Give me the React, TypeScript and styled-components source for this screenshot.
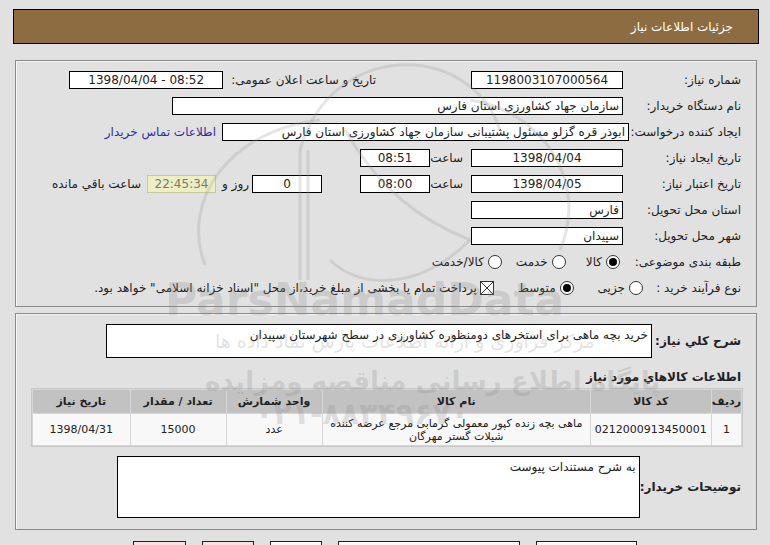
import styled, { createGlobalStyle } from "styled-components";

const GlobalStyle = createGlobalStyle`
  html, body {
    margin: 0;
    padding: 0;
    background: #e1e1e1;
    overflow: hidden;
  }
  body {
    font-family: Tahoma, "DejaVu Sans", sans-serif;
    font-size: 12px;
    color: #222;
  }
`;

const Page = styled.div`
  position: relative;
  direction: rtl;
  padding: 9px 11px 0 13px;
  width: 746px;
`;

const TitleBar = styled.div`
  height: 33px;
  background: #8c6c40;
  border: 1px solid #000;
  color: #fff;
  display: flex;
  align-items: center;
  padding-right: 25px;
  font-size: 12px;
`;

const Panel = styled.div<{ $top: number; $pad: string }>`
  margin: ${(p) => p.$top}px 2px 0 2px;
  border: 1px solid #8a8a8a;
  box-shadow: inset 1px 1px 0 #f4f4f4;
  padding: ${(p) => p.$pad};
`;

const Row = styled.div<{ $h?: number }>`
  display: flex;
  align-items: center;
  height: ${(p) => p.$h ?? 26}px;
  white-space: nowrap;
`;

const Label = styled.div<{ $w?: number; $bold?: boolean }>`
  width: ${(p) => (p.$w ? `${p.$w}px` : "auto")};
  flex-shrink: 0;
  font-weight: ${(p) => (p.$bold ? "bold" : "normal")};
  color: #222;
`;

const Field = styled.div<{ $w: number; $align?: string; $mr?: number; $ltr?: boolean }>`
  width: ${(p) => p.$w}px;
  height: 16px;
  margin-right: ${(p) => p.$mr ?? 0}px;
  background: #fff;
  border: 1px solid #000;
  text-align: ${(p) => p.$align ?? "center"};
  padding: 0 3px;
  box-sizing: content-box;
  line-height: 16px;
  overflow: hidden;
  flex-shrink: 0;
  direction: ${(p) => (p.$ltr ? "ltr" : "rtl")};
`;

const Remaining = styled(Field)`
  background: #eeeec4;
  border-color: #c8c8a0;
  color: #7a7a6a;
`;

const Text = styled.span<{ $mr?: number; $w?: number }>`
  display: inline-block;
  width: ${(p) => (p.$w ? `${p.$w}px` : "auto")};
  margin-right: ${(p) => p.$mr ?? 0}px;
  flex-shrink: 0;
`;

const Link = styled.a`
  margin-right: 6px;
  color: #2e2e9a;
  text-decoration: none;
`;

const Radio = styled.span<{ $on?: boolean; $mr?: number }>`
  width: 12px;
  height: 12px;
  border-radius: 50%;
  border: 1px solid #333;
  background: #fff;
  display: inline-flex;
  align-items: center;
  justify-content: center;
  margin-right: ${(p) => p.$mr ?? 0}px;
  margin-left: 4px;
  flex-shrink: 0;
  &::after {
    content: "";
    width: 8px;
    height: 8px;
    border-radius: 50%;
    background: ${(p) => (p.$on ? "#000" : "transparent")};
  }
`;

const Check = styled.svg`
  width: 14px;
  height: 14px;
  margin-right: 24px;
  margin-left: 3px;
  flex-shrink: 0;
`;

const TextBox = styled.div<{ $w: number; $h: number }>`
  width: ${(p) => p.$w}px;
  height: ${(p) => p.$h}px;
  margin-right: auto;
  background: #fff;
  border: 1px solid #000;
  padding: 2px 3px;
  box-sizing: border-box;
  line-height: 16px;
  flex-shrink: 0;
`;

const BoxRow = styled.div<{ $h: number; $mt: number; $ml: number }>`
  display: flex;
  align-items: center;
  height: ${(p) => p.$h}px;
  margin-top: ${(p) => p.$mt}px;
  padding-left: ${(p) => p.$ml}px;
  white-space: nowrap;
`;

const Heading = styled.div`
  font-weight: bold;
  font-size: 12px;
  margin-top: 8px;
  height: 22px;
  line-height: 22px;
`;

const Grid = styled.table`
  width: 712px;
  margin-right: -2px;
  border-collapse: separate;
  border-spacing: 1px;
  background: #d6d6d6;
  border: 1px solid #c8c8c8;
  font-size: 11px;
`;

const Th = styled.th<{ $w: number }>`
  width: ${(p) => p.$w}px;
  height: 23px;
  background: #c2c2c2;
  font-weight: bold;
  color: #222;
  text-align: center;
  padding: 0;
`;

const Td = styled.td`
  height: 31px;
  background: #f8f8f8;
  text-align: center;
  line-height: 13px;
  padding: 0 4px;
`;

const ButtonRow = styled.div`
  display: flex;
  gap: 16px;
  margin-top: 11px;
  margin-right: 122px;
`;

const Btn = styled.div<{ $w: number; $pink?: boolean }>`
  width: ${(p) => p.$w}px;
  height: 22px;
  border: 1px solid #222;
  background: ${(p) => (p.$pink ? "#f6e2e2" : "#fbfbfb")};
`;

const Watermark = styled.div`
  position: absolute;
  inset: 0;
  pointer-events: none;
  direction: ltr;
`;

const WmText = styled.div<{ $top: number; $left: number; $size: number; $weight?: number }>`
  position: absolute;
  top: ${(p) => p.$top}px;
  left: ${(p) => p.$left}px;
  font-size: ${(p) => p.$size}px;
  font-weight: ${(p) => p.$weight ?? 700};
  font-family: "DejaVu Sans", sans-serif;
  color: rgba(140, 140, 140, 0.25);
  white-space: nowrap;
`;

export default function App() {
  return (
    <>
      <GlobalStyle />
      <Page>
        <TitleBar>جزئیات اطلاعات نیاز</TitleBar>

        <Panel $top={16} $pad="6px 15px 5px 0">
          <Row>
            <Label $w={118}>شماره نیاز:</Label>
            <Field $w={144} $ltr>1198003107000564</Field>
            <Label style={{ marginRight: 95 }}>تاریخ و ساعت اعلان عمومی:</Label>
            <Field $w={146} $mr={8} $ltr>1398/04/04 - 08:52</Field>
          </Row>
          <Row>
            <Label $w={118}>نام دستگاه خریدار:</Label>
            <Field $w={443} $align="right">سازمان جهاد کشاورزی استان فارس</Field>
          </Row>
          <Row>
            <Label $w={112}>ایجاد کننده درخواست:</Label>
            <Field $w={399} $align="right">ابوذر قره گزلو مسئول پشتیبانی سازمان جهاد کشاورزی استان فارس</Field>
            <Link href="#">اطلاعات تماس خریدار</Link>
          </Row>
          <Row>
            <Label $w={118}>تاریخ ایجاد نیاز:</Label>
            <Field $w={144} $ltr>1398/04/04</Field>
            <Text $mr={8} $w={31}>ساعت</Text>
            <Field $w={62} $mr={2} $ltr>08:51</Field>
          </Row>
          <Row>
            <Label $w={118}>تاریخ اعتبار نیاز:</Label>
            <Field $w={144} $ltr>1398/04/05</Field>
            <Text $mr={8} $w={31}>ساعت</Text>
            <Field $w={62} $mr={2} $ltr>08:00</Field>
            <Field $w={62} $mr={38} $ltr>0</Field>
            <Text $mr={3} $w={24}>روز و</Text>
            <Remaining $w={61} $mr={9} $ltr>22:45:34</Remaining>
            <Text $mr={6}>ساعت باقي مانده</Text>
          </Row>
          <Row>
            <Label $w={118}>استان محل تحویل:</Label>
            <Field $w={144} $align="right">فارس</Field>
          </Row>
          <Row>
            <Label $w={118}>شهر محل تحویل:</Label>
            <Field $w={144} $align="right">سپیدان</Field>
          </Row>
          <Row>
            <Label $w={118}>طبقه بندی موضوعی:</Label>
            <Radio $on $mr={3} />
            <Text>کالا</Text>
            <Radio $mr={20} />
            <Text>خدمت</Text>
            <Radio $mr={14} />
            <Text>کالا/خدمت</Text>
          </Row>
          <Row>
            <Label $w={98}>نوع فرآیند خرید :</Label>
            <Radio />
            <Text>جزیی</Text>
            <Radio $on $mr={24} />
            <Text>متوسط</Text>
            <Check viewBox="0 0 14 14">
              <rect x="0.5" y="0.5" width="13" height="13" fill="#fff" stroke="#333" />
              <path d="M1 1 L13 13 M13 1 L1 13" stroke="#333" strokeWidth="1" />
            </Check>
            <Text>پرداخت تمام یا بخشی از مبلغ خرید،از محل "اسناد خزانه اسلامی" خواهد بود.</Text>
          </Row>
        </Panel>

        <Panel $top={6} $pad="10px 15px 11px 0">
          <BoxRow $h={34} $mt={0} $ml={90}>
            <Label $bold>شرح کلي نیاز:</Label>
            <TextBox $w={546} $h={34}>
              خرید بچه ماهی برای استخرهای دومنظوره کشاورزی در سطح شهرستان سپیدان
            </TextBox>
          </BoxRow>
          <Heading>اطلاعات کالاهاي مورد نیاز</Heading>
          <Grid>
            <thead>
              <tr>
                <Th $w={28}>ردیف</Th>
                <Th $w={98}>کد کالا</Th>
                <Th $w={280}>نام کالا</Th>
                <Th $w={98}>واحد شمارش</Th>
                <Th $w={98}>تعداد / مقدار</Th>
                <Th $w={98}>تاریخ نیاز</Th>
              </tr>
            </thead>
            <tbody>
              <tr>
                <Td>1</Td>
                <Td>0212000913450001</Td>
                <Td>
                  ماهی بچه زنده کپور معمولی گرمابی مرجع عرضه کننده
                  <br />
                  شیلات گستر مهرگان
                </Td>
                <Td>عدد</Td>
                <Td>15000</Td>
                <Td>1398/04/31</Td>
              </tr>
            </tbody>
          </Grid>
          <BoxRow $h={62} $mt={9} $ml={104}>
            <Label $bold>توضیحات خریدار:</Label>
            <TextBox $w={523} $h={62}>به شرح مستندات پیوست</TextBox>
          </BoxRow>
        </Panel>

        <ButtonRow>
          <Btn $w={99} />
          <Btn $w={180} />
          <Btn $w={50} />
          <Btn $w={50} $pink />
          <Btn $w={51} $pink />
        </ButtonRow>

        <Watermark>
          <svg width="770" height="545" style={{ position: "absolute", left: 0, top: 0 }}>
            <g fill="none" stroke="rgba(150,150,150,0.25)" strokeWidth="3">
              <path d="M300 150 C 330 40, 470 40, 500 130" />
              <path d="M205 265 C 180 200, 230 130, 320 120" />
              <path d="M560 250 C 590 180, 540 110, 470 100" />
              <path d="M300 150 L300 280 M308 150 L308 280" />
              <path d="M345 130 C 380 190, 420 220, 470 240" />
              <path d="M470 240 C 420 290, 360 290, 330 260" />
            </g>
          </svg>
          <WmText $top={274} $left={165} $size={44}>ParsNamadData</WmText>
          <WmText $top={330} $left={215} $size={19} $weight={400}>مرکز فراوری و ارائه اطلاعات پارس نماد داده ها</WmText>
          <WmText $top={366} $left={205} $size={26}>پایگاه اطلاع رسانی مناقصه ومزایده</WmText>
          <WmText $top={396} $left={255} $size={30}>۰۲۱-۸۸۳۴۹۶۷۰</WmText>
        </Watermark>
      </Page>
    </>
  );
}
